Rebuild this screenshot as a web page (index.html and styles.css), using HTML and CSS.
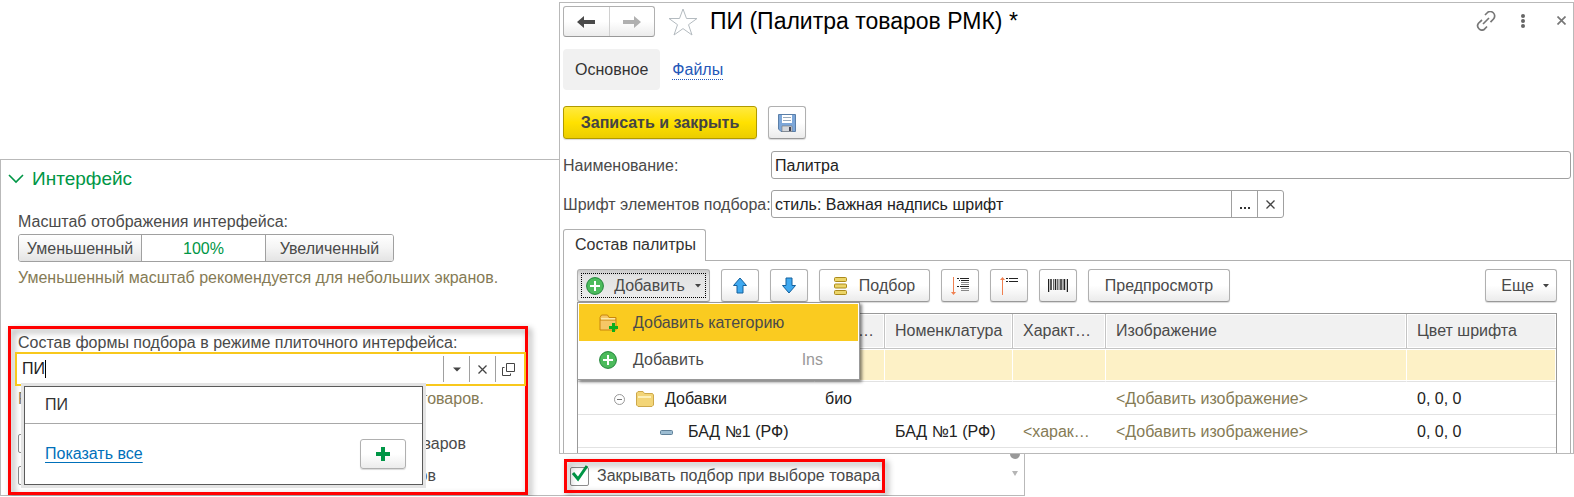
FILE: index.html
```html
<!DOCTYPE html>
<html lang="ru">
  <head>
    <meta charset="utf-8" />
    <title>Палитра товаров РМК</title>
    <link rel="stylesheet" href="styles.css" />
  </head>
  <body>
    <div class="desktop">
      <!-- settings window -->
      <section class="window settings">
        <div class="settings-main">
          <h2 class="group-title">
            <svg width="16" height="10" viewBox="0 0 16 10">
              <path d="M1 1l7 7 7-7" fill="none" stroke="#009646" stroke-width="1.6" />
            </svg>
            Интерфейс
          </h2>
          <div class="scale">
            <div class="text">Масштаб отображения интерфейса:</div>
            <div class="segments">
              <label><input type="radio" name="scale" /><span>Уменьшенный</span></label>
              <label><input type="radio" name="scale" checked /><span>100%</span></label>
              <label><input type="radio" name="scale" /><span>Увеличенный</span></label>
            </div>
            <div class="text hint">Уменьшенный масштаб рекомендуется для небольших экранов.</div>
          </div>

          <div class="frame frame-combo">
            <label class="text combo-label" for="form">Состав формы подбора в режиме плиточного интерфейса:</label>
            <div class="combo">
              <input type="text" id="form" value="ПИ" />
              <span class="caret"></span>
              <button type="button" aria-label="Открыть список">
                <svg width="8" height="5" viewBox="0 0 8 5"><path d="M0 .5h8L4 4.5z" fill="#444" /></svg>
              </button>
              <button type="button" aria-label="Очистить">
                <svg width="9" height="9" viewBox="0 0 9 9"><path d="M.5 .5l8 8M8.5 .5l-8 8" stroke="#444" stroke-width="1.3" /></svg>
              </button>
              <button type="button" aria-label="Открыть">
                <svg width="13" height="13" viewBox="0 0 13 13"><path d="M4.5 .5h8v8h-8zM2.5 4.5h-2v8h8v-2" fill="none" stroke="#444" /></svg>
              </button>
              <div class="popup">
                <div class="popup-item">ПИ</div>
                <div class="popup-footer">
                  <a href="#">Показать все</a>
                  <button type="button" class="btn btn-plus" aria-label="Создать">
                    <svg width="14" height="14" viewBox="0 0 14 14"><path d="M5 0h4v5h5v4H9v5H5V9H0V5h5z" fill="#009646" /></svg>
                  </button>
                </div>
              </div>
            </div>
            <div class="behind behind-hint"><span>Р</span><span>товаров.</span></div>
            <label class="behind behind-check"><input type="checkbox" class="check" /><span>товаров</span></label>
            <label class="behind behind-check behind-last"><input type="checkbox" class="check" /><span>товаров</span></label>
          </div>
        </div>

        <div class="frame frame-close">
          <label class="close-label">
            <input type="checkbox" class="check" checked />
            <svg class="tick" width="19" height="19" viewBox="0 0 19 19">
              <path d="M3 8l5 6 9-13" fill="none" stroke="#009646" stroke-width="3" />
            </svg>
            <span>Закрывать подбор при выборе товара</span>
          </label>
        </div>

        <div class="scroll">
          <span class="scroll-thumb"></span>
          <svg width="6" height="5" viewBox="0 0 6 5"><path d="M0 0h6L3 5z" fill="#b5b5b5" /></svg>
        </div>
      </section>

      <!-- palette window -->
      <section class="window palette">
        <header class="titlebar">
          <div class="nav">
            <button type="button" aria-label="Назад">
              <svg width="18" height="12" viewBox="0 0 18 12"><path d="M7 0v4h11v4H7v4L0 6z" fill="#4a4a4a" /></svg>
            </button>
            <button type="button" aria-label="Вперед">
              <svg width="18" height="12" viewBox="0 0 18 12"><path d="M11 0v4H0v4h11v4l7-6z" fill="#b0b0b0" /></svg>
            </button>
          </div>
          <svg class="star" width="30" height="28" viewBox="0 0 30 28">
            <path d="M15 1l3.5 9.5h10.5l-8.5 6.2 3.5 10.3-9-6.4-9 6.4 3.5-10.3L1 10.5h10.5z" fill="none" stroke="#b4bbc0" />
          </svg>
          <h1>ПИ (Палитра товаров РМК) *</h1>
          <div class="window-tools">
            <button type="button" aria-label="Получить ссылку">
              <svg width="20" height="20" viewBox="0 0 20 20">
                <path d="M9 4l2-2a4.3 4.3 0 0 1 6.5 6l-3 3.2M6 9l-3.5 3.2a4.3 4.3 0 0 0 6 6l2.5-2.7M7 13l6-6" fill="none" stroke="#777" stroke-width="1.7" />
              </svg>
            </button>
            <button type="button" aria-label="Меню">
              <svg width="4" height="14" viewBox="0 0 4 14"><g fill="#666"><circle cx="2" cy="2" r="2" /><circle cx="2" cy="7" r="2" /><circle cx="2" cy="12" r="2" /></g></svg>
            </button>
            <button type="button" aria-label="Закрыть">
              <svg width="9" height="9" viewBox="0 0 9 9"><path d="M.5 .5l8 8M8.5 .5l-8 8" stroke="#777" stroke-width="1.7" /></svg>
            </button>
          </div>
        </header>

        <nav class="sections">
          <span class="section-current">Основное</span>
          <a href="#">Файлы</a>
        </nav>

        <div class="commands">
          <button type="button" class="btn btn-main">Записать и закрыть</button>
          <button type="button" class="btn btn-icon" aria-label="Записать">
            <svg width="18" height="18" viewBox="0 0 18 18">
              <path d="M.5 .5h17v17H3l-2.5-2.5z" fill="#7da7d9" stroke="#5b7fa8" />
              <path d="M4 1h10v8H4z" fill="#fff" />
              <path d="M5 3.5h8M5 6.5h8" stroke="#9ab" />
              <path d="M4 12h10v5.5H4z" fill="#d5d8dc" stroke="#777" stroke-width=".6" />
              <path d="M11 13h2v4h-2z" fill="#445" />
            </svg>
          </button>
        </div>

        <div class="field">
          <label for="name">Наименование:</label>
          <div class="input"><input type="text" id="name" value="Палитра" /></div>
        </div>
        <div class="field">
          <label for="font">Шрифт элементов подбора:</label>
          <div class="input input-font">
            <input type="text" id="font" value="стиль: Важная надпись шрифт" />
            <button type="button" aria-label="Выбрать">
              <svg width="10" height="10" viewBox="0 0 10 10"><path d="M0 8h2v2H0zM4 8h2v2H4zM8 8h2v2H8z" fill="#333" /></svg>
            </button>
            <button type="button" aria-label="Очистить">
              <svg width="9" height="9" viewBox="0 0 9 9"><path d="M.5 .5l8 8M8.5 .5l-8 8" stroke="#444" stroke-width="1.3" /></svg>
            </button>
          </div>
        </div>

        <div class="tab">Состав палитры</div>
        <div class="panel">
          <div class="toolbar">
            <div class="dropdown">
              <button type="button" class="btn btn-add">
                <svg width="18" height="18" viewBox="0 0 18 18"><circle cx="9" cy="9" r="8.4" fill="#4cbb5c" stroke="#22853a" /><path d="M9 4v10M4 9h10" stroke="#fff" stroke-width="2" /></svg>
                <span>Добавить</span>
                <svg width="6" height="4" viewBox="0 0 6 4"><path d="M0 0h6L3 3.5z" fill="#444" /></svg>
              </button>
              <ul class="menu">
                <li class="menu-active">
                  <svg width="20" height="18" viewBox="0 0 20 18">
                    <path d="M1 16V3.5L2.5 1h6L10 3.5h7V16z" fill="#f6c766" stroke="#c8860d" />
                    <path d="M1 6h16" stroke="#c8860d" /><path d="M2 4h14v1.5H2z" fill="#fdeaa8" />
                    <path d="M14.500 9v9M10 13.500h9" stroke="#0cae1c" stroke-width="3" />
                  </svg>
                  <span>Добавить категорию</span>
                </li>
                <li>
                  <svg width="20" height="18" viewBox="0 0 20 18"><circle cx="9" cy="9" r="8.4" fill="#4cbb5c" stroke="#22853a" /><path d="M9 4v10M4 9h10" stroke="#fff" stroke-width="2" /></svg>
                  <span>Добавить</span>
                  <kbd>Ins</kbd>
                </li>
              </ul>
            </div>
            <button type="button" class="btn btn-icon" aria-label="Вверх">
              <svg width="16" height="17" viewBox="0 0 16 17"><path d="M8 1l6.500 7.500H11V16H5V8.500H1.500z" fill="#3fa9f0" stroke="#14609c" /></svg>
            </button>
            <button type="button" class="btn btn-icon" aria-label="Вниз">
              <svg width="16" height="17" viewBox="0 0 16 17"><path d="M8 16L1.500 8.500H5V1h6v7.500h3.500z" fill="#3fa9f0" stroke="#14609c" /></svg>
            </button>
            <button type="button" class="btn btn-pick">
              <svg width="13" height="18" viewBox="0 0 13 18"><g fill="#ecd568" stroke="#ab8a1c"><rect x=".5" y=".5" width="12" height="4" rx="1" /><rect x=".5" y="7" width="12" height="4" rx="1" /><rect x=".5" y="13.5" width="12" height="4" rx="1" /></g></svg>
              <span>Подбор</span>
            </button>
            <button type="button" class="btn btn-icon" aria-label="Развернуть">
              <svg width="20" height="18" viewBox="0 0 20 18">
                <path d="M3.500 0v16" stroke="#f08050" /><path d="M1 15h5l-2.500 3z" fill="#f08050" />
                <path d="M7 1.500h2M10 1.500h9M9 3.500h1M11 3.500h8M7 9.500h2M10 9.500h9" stroke="#222" />
                <path d="M11 5.500h8M11 7.500h8M11 11.500h8M11 13.500h8" stroke="#888" />
              </svg>
            </button>
            <button type="button" class="btn btn-icon" aria-label="Свернуть">
              <svg width="20" height="18" viewBox="0 0 20 18">
                <path d="M3.500 2v16" stroke="#f08050" /><path d="M1 3h5L3.500 0z" fill="#f08050" />
                <path d="M7 1.500h2M10 1.500h9M7 4.500h2M10 4.500h9" stroke="#222" />
              </svg>
            </button>
            <button type="button" class="btn btn-icon" aria-label="Штрихкод">
              <svg width="20" height="13" viewBox="0 0 20 13">
                <path d="M.5 0v13M19.500 0v13M3 0v11M7.500 0v11M13 0v11M16.500 0v11" stroke="#222" stroke-width="1.5" />
                <path d="M5.500 0v11M9.500 0v11M11 0v11M15 0v11" stroke="#444" stroke-width=".8" />
              </svg>
            </button>
            <button type="button" class="btn btn-text">Предпросмотр</button>
            <button type="button" class="btn btn-more">
              <span>Еще</span>
              <svg width="6" height="4" viewBox="0 0 6 4"><path d="M0 0h6L3 3.5z" fill="#444" /></svg>
            </button>
          </div>

          <div class="goods-box">
            <table class="goods">
              <colgroup>
                <col class="col-name" />
                <col class="col-short" />
                <col class="col-item" />
                <col class="col-char" />
                <col />
                <col class="col-color" />
              </colgroup>
              <thead>
                <tr>
                  <th></th>
                  <th class="dots">…</th>
                  <th>Номенклатура</th>
                  <th>Характ…</th>
                  <th>Изображение</th>
                  <th>Цвет шрифта</th>
                </tr>
              </thead>
              <tbody>
                <tr class="selected"><td><div class="current"></div></td><td></td><td></td><td></td><td></td><td></td></tr>
                <tr>
                  <td>
                    <div class="tree">
                      <svg width="11" height="11" viewBox="0 0 11 11"><circle cx="5.5" cy="5.5" r="5" fill="none" stroke="#999" /><path d="M3 5.5h5" stroke="#777" /></svg>
                      <svg width="18" height="16" viewBox="0 0 18 16"><path d="M.5 14V2L2 .5h5L8.500 2.500h8L17.500 4v10L16 15.500H2z" fill="#f3d577" stroke="#cda84a" /><path d="M2 6h13" stroke="#fdf0b8" stroke-width="2" /></svg>
                      Добавки
                    </div>
                  </td>
                  <td>био</td>
                  <td></td>
                  <td></td>
                  <td class="empty">&lt;Добавить изображение&gt;</td>
                  <td>0, 0, 0</td>
                </tr>
                <tr>
                  <td>
                    <div class="tree tree-child">
                      <svg width="13" height="5" viewBox="0 0 13 5"><rect x=".5" y=".5" width="12" height="4" rx="1" fill="#9dbdd2" stroke="#5f8098" /></svg>
                      БАД №1 (РФ)
                    </div>
                  </td>
                  <td></td>
                  <td>БАД №1 (РФ)</td>
                  <td class="empty">&lt;харак…</td>
                  <td class="empty">&lt;Добавить изображение&gt;</td>
                  <td>0, 0, 0</td>
                </tr>
              </tbody>
            </table>
          </div>
        </div>
      </section>
    </div>
  </body>
</html>
```

FILE: styles.css
```css
* {
  box-sizing: border-box;
}
body {
  margin: 0;
  background: #fff;
  color: #4a4a4a;
  font-family: "Liberation Sans", Arial, sans-serif;
  font-size: 16px;
  line-height: 20px;
}
button,
input {
  font: inherit;
  color: inherit;
  margin: 0;
}
svg {
  display: block;
  flex: none;
}
h1,
h2,
ul {
  margin: 0;
  padding: 0;
  font-weight: normal;
}

/* both windows share the grid, the palette overlaps the settings */
.desktop {
  display: grid;
  grid-template-columns: 559px 466fr 549fr;
  align-items: start;
}
.window {
  border: 1px solid #b9b9b9;
  background: #fff;
  grid-row: 1;
  min-width: 0;
}
.settings {
  grid-column: 1 / 3;
  margin-top: 159px;
  display: flex;
}
.palette {
  grid-column: 2 / 4;
  margin-top: 2px;
  padding: 3px 2px 0 3px;
}

/* settings */
.settings-main {
  flex: none;
  width: 563px;
  padding-top: 7px;
}
.group-title {
  display: flex;
  align-items: center;
  gap: 8px;
  padding-left: 7px;
  font-size: 19px;
  line-height: 24px;
  color: #009646;
}
.scale {
  padding: 21px 0 0 17px;
}
.segments {
  display: inline-flex;
  height: 28px;
  margin: 2px 0 6px;
  border: 1px solid #a0a0a0;
  border-radius: 3px;
  overflow: hidden;
  vertical-align: top;
}
.segments label {
  width: 124px;
  border-right: 1px solid #a0a0a0;
}
.segments label:first-child {
  width: 123px;
}
.segments label:last-child {
  width: 127px;
  border-right: none;
}
.segments input {
  position: absolute;
  opacity: 0;
}
.segments span {
  display: block;
  height: 26px;
  line-height: 27px;
  text-align: center;
  background: linear-gradient(#fff, #f4f4f4 50%, #e4e4e4);
}
.segments input:checked + span {
  background: #fff;
  color: #009646;
}
.hint,
.behind-hint,
.empty {
  color: #857b55;
}

.frame {
  position: relative;
}
.frame::after {
  content: "";
  position: absolute;
  inset: 0;
  border: 3px solid #f00;
  filter: drop-shadow(3px 3px 3px rgba(0, 0, 0, 0.4));
  pointer-events: none;
}
.frame-combo {
  width: 520px;
  margin: 38px 0 0 7px;
  padding: 7px 2px 9px 7px;
}
.combo-label {
  display: block;
  padding-left: 3px;
  line-height: 19px;
}
.combo {
  position: relative;
  z-index: 1;
  display: flex;
  align-items: center;
  width: 511px;
  height: 34px;
  border: 2px solid #f8c81c;
  background: #fff;
}
.combo input,
.input input {
  flex: 1;
  min-width: 0;
  height: 100%;
  padding: 0 5px;
  border: none;
  outline: none;
  background: none;
  color: #222;
}
.combo button,
.input button {
  display: flex;
  align-items: center;
  justify-content: center;
  width: 26px;
  height: 26px;
  padding: 0;
  border: none;
  border-left: 1px solid #a0a0a0;
  background: none;
}
.combo > button:nth-of-type(3) {
  width: 29px;
  padding-right: 3px;
}
.caret {
  position: absolute;
  left: 28px;
  top: 6px;
  width: 1px;
  height: 18px;
  background: #000;
}
.popup {
  position: absolute;
  top: 32px;
  left: 7px;
  width: 399px;
  border: 1px solid #5a5a5a;
  outline: 3px solid #e4e4e4;
  background: #fff;
}
.popup-item {
  height: 37px;
  padding-left: 20px;
  line-height: 35px;
  color: #333;
  border-bottom: 1px solid #a8a8a8;
}
.popup-footer {
  display: flex;
  align-items: center;
  justify-content: space-between;
  height: 60px;
  padding: 0 16px 0 20px;
}
.popup-footer a {
  color: #0070ba;
  text-underline-offset: 3px;
}
.popup .btn-plus {
  width: 46px;
  height: 30px;
  border: 1px solid #b0b0b0;
  background: linear-gradient(#fff 50%, #ececec);
}
.behind {
  display: flex;
  justify-content: space-between;
  margin-left: 3px;
}
.behind-hint {
  width: 466px;
  margin-top: 3px;
}
.behind-check {
  width: 448px;
  margin-top: 25px;
}
.behind-last {
  width: 418px;
  margin-top: 12px;
}
.check {
  appearance: none;
  width: 19px;
  height: 19px;
  border: 1px solid #8c8c8c;
  border-radius: 2px;
  background: #fff;
}
.frame-close {
  align-self: flex-end;
  flex: none;
  margin-bottom: 2px;
  padding: 7px 5px 7px 6px;
}
.close-label {
  display: flex;
  align-items: center;
  gap: 8px;
  height: 20px;
}
.tick {
  position: absolute;
  left: 6px;
  top: 6px;
}
.scroll {
  display: flex;
  flex-direction: column;
  align-items: center;
  align-self: flex-end;
  gap: 12px;
  height: 46px;
  margin-left: auto;
  padding-right: 4px;
}
.scroll-thumb {
  width: 10px;
  height: 10px;
  border-radius: 5px;
  background: #999;
}

/* palette window */
.titlebar {
  display: flex;
  align-items: center;
  height: 31px;
}
.nav {
  display: flex;
  width: 92px;
  height: 31px;
  border: 1px solid #b0b0b0;
  border-bottom-color: #999;
  border-radius: 3px;
  background: linear-gradient(#fff 50%, #ececec);
}
.nav button {
  display: flex;
  flex: 1;
  align-items: center;
  justify-content: center;
  padding: 0;
  border: none;
  background: none;
}
.nav button + button {
  border-left: 1px solid #d0d0d0;
}
.star {
  margin: 0 12px 0 13px;
}
h1 {
  font-size: 23px;
  line-height: 28px;
  padding-bottom: 2px;
  color: #000;
}
.window-tools {
  display: flex;
  align-items: center;
  gap: 25px;
  margin-left: auto;
  padding: 0 5px 2px 0;
}
.window-tools button {
  padding: 0;
  border: none;
  background: none;
}
.window-tools button:last-child {
  margin-left: 7px;
}
.sections {
  display: flex;
  align-items: center;
  gap: 12px;
  margin-top: 12px;
}
.section-current {
  padding: 11px 12px 10px;
  border-radius: 4px;
  background: #f1f1f1;
  color: #333;
}
.sections a {
  margin-top: 2px;
  color: #2457b8;
  text-decoration: none;
  line-height: 18px;
  border-bottom: 1px dotted #2457b8;
}
.commands {
  display: flex;
  gap: 11px;
  margin: 16px 0 12px;
}
.btn {
  display: flex;
  align-items: center;
  justify-content: center;
  height: 33px;
  padding: 0;
  border: 1px solid #b0b0b0;
  border-bottom-color: #999;
  border-radius: 3px;
  background: linear-gradient(#fff 50%, #ebebeb);
  box-shadow: 0 1px 1px rgba(0, 0, 0, 0.15);
  white-space: nowrap;
}
.btn-main {
  width: 194px;
  border-color: #b09a00;
  background: linear-gradient(#ffe940, #ffe100 50%, #ebcd00);
  font-weight: bold;
  color: #444;
}
.btn-icon {
  width: 38px;
}
.field {
  display: flex;
  align-items: center;
  margin-bottom: 11px;
}
.field label {
  flex: none;
  width: 208px;
  padding-top: 2px;
}
.input {
  display: flex;
  flex: 1;
  height: 28px;
  border: 1px solid #a0a0a0;
  border-radius: 3px;
}
.input input {
  padding: 2px 3px 0;
}
.input-font {
  flex: none;
  width: 513px;
}
.tab {
  position: relative;
  width: 143px;
  height: 32px;
  margin-bottom: -1px;
  padding-left: 11px;
  line-height: 30px;
  color: #333;
  border: 1px solid #b0b0b0;
  border-bottom: none;
  border-radius: 3px 3px 0 0;
  background: #fff;
}
.panel {
  border: 1px solid #b0b0b0;
  border-bottom: none;
  padding: 8px 13px 0;
}
.toolbar {
  display: flex;
  gap: 11px;
  margin-bottom: 11px;
}
.dropdown {
  position: relative;
}
.btn-add {
  width: 133px;
  gap: 10px;
  background: linear-gradient(#c8c8c8, #e2e2e2 20%, #ededed);
  outline: 1px dotted #000;
  outline-offset: -5px;
}
.btn-pick {
  width: 111px;
  gap: 12px;
}
.btn-text {
  width: 142px;
}
.btn-more {
  width: 72px;
  gap: 9px;
  margin-left: auto;
  padding-left: 8px;
}
.menu {
  position: absolute;
  z-index: 2;
  top: 33px;
  left: 0;
  width: 283px;
  padding: 1px;
  list-style: none;
  border: 1px solid #999;
  background: #fff;
  box-shadow: 2px 2px 3px rgba(0, 0, 0, 0.5);
}
.menu li {
  display: flex;
  align-items: center;
  height: 37px;
  padding: 0 35px 0 20px;
  gap: 14px;
}
.menu-active {
  background: #facb20;
}
.menu kbd {
  margin-left: auto;
  font: inherit;
  color: #999;
}

.goods-box {
  padding-bottom: 5px;
  border: 1px solid #999;
  border-bottom: none;
}
.goods {
  width: 100%;
  table-layout: fixed;
  border-spacing: 0;
}
.col-name {
  width: 237px;
}
.col-short {
  width: 70px;
}
.col-item {
  width: 128px;
}
.col-char {
  width: 93px;
}
.col-color {
  width: 149px;
}
.goods th,
.goods td {
  padding: 0 0 0 10px;
  text-align: left;
  font-weight: normal;
  white-space: nowrap;
}
.goods th {
  height: 35px;
  background: #f1f1f1;
  border-right: 1px solid #c4c4c4;
  border-bottom: 1px solid #c4c4c4;
  box-shadow: inset 0 0 0 1px #fff;
}
.goods td {
  height: 33px;
  padding-top: 2px;
  color: #222;
  border-bottom: 1px solid #e2e2e2;
}
.goods th:last-child,
.goods td:last-child {
  border-right: none;
}
.goods .dots {
  padding: 0 10px 0 0;
  text-align: right;
}
.goods .selected td {
  padding-top: 0;
  background: #fdf1c6;
  border-right: 1px solid #fff;
  box-shadow: inset 0 1px #fff, inset 0 -1px #fff;
}
.current {
  width: 133px;
  height: 30px;
  margin-left: 50px;
  border: 2px solid #e6b820;
}
.goods .empty {
  color: #857b55;
}
.tree {
  display: flex;
  align-items: center;
  gap: 11px;
  padding-left: 26px;
}
.tree-child {
  gap: 15px;
  padding-left: 72px;
}
```
